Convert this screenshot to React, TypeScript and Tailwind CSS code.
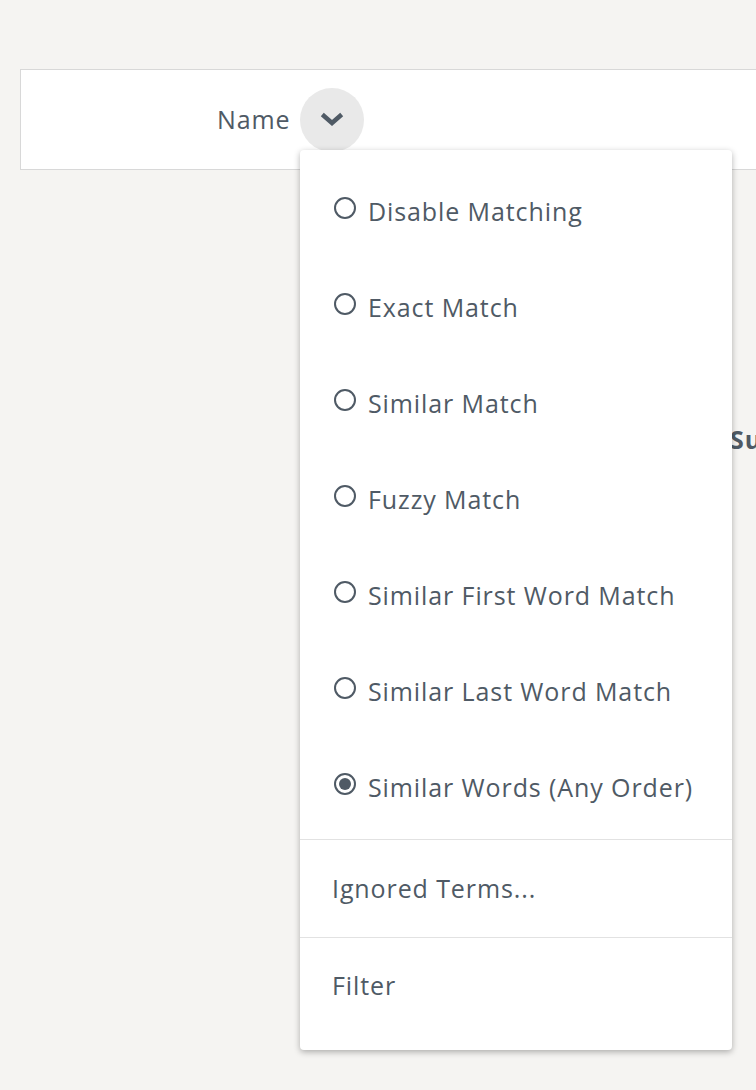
import React from 'react';

const options = [
  'Disable Matching',
  'Exact Match',
  'Similar Match',
  'Fuzzy Match',
  'Similar First Word Match',
  'Similar Last Word Match',
  'Similar Words (Any Order)',
];

function Radio({ checked }: { checked: boolean }) {
  return (
    <span className="flex h-[22px] w-[22px] shrink-0 items-center justify-center rounded-full border-2 border-[#4f5a65] -translate-y-[4px]">
      {checked && <span className="h-[12px] w-[12px] rounded-full bg-[#4f5a65]" />}
    </span>
  );
}

export default function App() {
  const selected = 6;

  return (
    <div
      className="relative h-[1090px] w-[756px] overflow-hidden bg-[#f5f4f2] text-[#4f5a65] tracking-[0.9px]"
      style={{ fontFamily: '"Open Sans", "Noto Sans", sans-serif' }}
    >
      {/* Header row */}
      <div className="ml-[20px] mt-[69px] flex h-[101px] w-[800px] items-center border border-[#d8d8d8] bg-white">
        <span className="ml-[196px] text-[25px]">Name</span>
        <button className="ml-[9px] flex h-[64px] w-[64px] items-center justify-center rounded-full bg-[#e9e9e9]">
          <svg width="26" height="16" viewBox="0 0 26 16" fill="none" stroke="#4f5a65" strokeWidth="4.5" strokeLinecap="square">
            <polyline points="5 4 13 11 21 4" />
          </svg>
        </button>
      </div>

      {/* Text behind the menu */}
      <div className="absolute left-[730px] top-[421px] whitespace-nowrap text-[25px] font-bold">Summary</div>

      {/* Dropdown menu */}
      <div className="absolute left-[300px] top-[150px] w-[432px] rounded-[4px] bg-white pb-[16px] pt-[14px] shadow-[0_2px_6px_rgba(0,0,0,0.3)]">
        <div className="pb-[3px]">
          {options.map((label, i) => (
            <div key={label} className="flex h-[96px] items-center gap-[12px] pl-[34px] text-[25px]">
              <Radio checked={i === selected} />
              <span>{label}</span>
            </div>
          ))}
        </div>
        <div className="flex h-[98px] items-center border-t border-[#e2e2e2] pl-[32px] text-[25px]">Ignored Terms...</div>
        <div className="flex h-[97px] items-center border-t border-[#e2e2e2] pl-[32px] text-[25px]">Filter</div>
      </div>
    </div>
  );
}
